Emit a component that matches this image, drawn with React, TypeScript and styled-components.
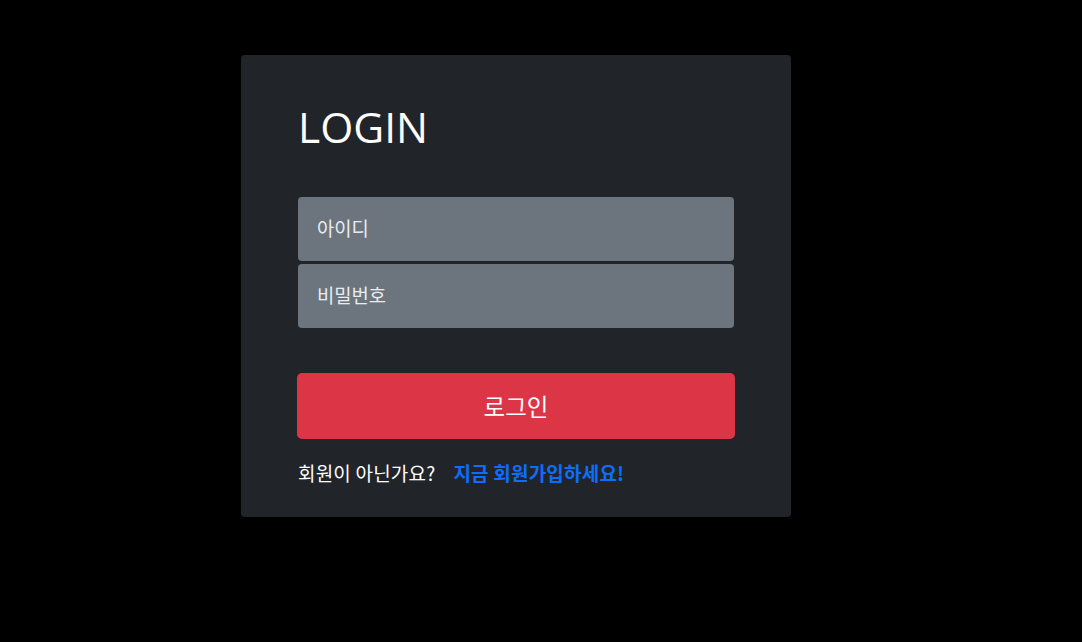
import styled, { createGlobalStyle } from 'styled-components';

const GlobalStyle = createGlobalStyle`
  html, body {
    margin: 0;
    background-color: #000;
  }
  body {
    font-family: "Open Sans", "Noto Sans CJK KR", sans-serif;
  }
  * {
    box-sizing: border-box;
  }
`;

function App() {
  return (
    <>
      <GlobalStyle />
      <Page>
        <Card>
          <Title>LOGIN</Title>
          <Form onSubmit={(e) => e.preventDefault()}>
            <Fields>
              <Input type="text" placeholder="아이디" />
              <Input type="password" placeholder="비밀번호" />
            </Fields>
            <SubmitButton type="submit">로그인</SubmitButton>
          </Form>
          <SignupRow>
            회원이 아닌가요?
            <SignupLink href="#">지금 회원가입하세요!</SignupLink>
          </SignupRow>
        </Card>
      </Page>
    </>
  );
}

export default App;

const Page = styled.div`
  min-height: 100vh;
  padding: 55px 0 0 241px;
`;

const Card = styled.div`
  width: 550px;
  height: 462px;
  padding: 46px 56px 0 56px;
  border-radius: 4px;
  background-color: #212529;
`;

const Title = styled.h1`
  margin: 0 0 0 1px;
  font-family: "Open Sans", sans-serif;
  font-size: 42.5px;
  font-weight: 400;
  line-height: 51px;
  color: #fff;
`;

const Form = styled.form`
  display: flex;
  flex-direction: column;
  margin-top: 45px;
`;

const Fields = styled.div`
  display: flex;
  flex-direction: column;
  gap: 3px;
  padding: 0 1px;
`;

const Input = styled.input`
  height: 64px;
  padding: 0 19px 3px 19px;
  border: none;
  border-radius: 4px;
  background-color: #6c757d;
  color: #fff;
  font-family: "Noto Sans CJK KR", sans-serif;
  font-size: 18.8px;
  outline: none;

  &::placeholder {
    color: #e9ecef;
  }
`;

const SubmitButton = styled.button`
  height: 66px;
  margin-top: 45px;
  padding-bottom: 2px;
  border: none;
  border-radius: 5px;
  background-color: #dc3545;
  color: #fff;
  font-family: "Noto Sans CJK KR", sans-serif;
  font-size: 23.5px;
  cursor: pointer;
`;

const SignupRow = styled.p`
  display: flex;
  align-items: center;
  gap: 18px;
  margin: 20px 0 0 1px;
  color: #fff;
  font-family: "Noto Sans CJK KR", sans-serif;
  font-size: 19px;
  letter-spacing: 0.2px;
`;

const SignupLink = styled.a`
  color: #0d6efd;
  font-weight: 700;
  text-decoration: none;
`;
